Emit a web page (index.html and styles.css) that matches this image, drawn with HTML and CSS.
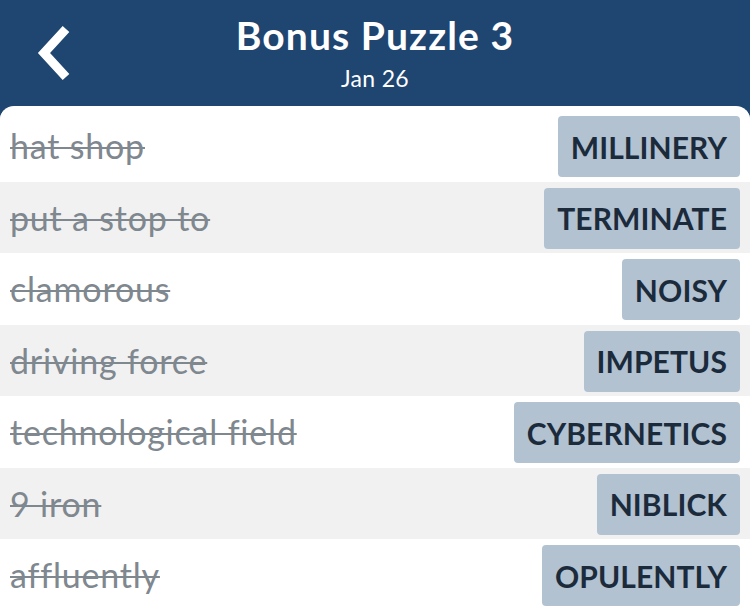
FILE: index.html
```html
<!DOCTYPE html>
<html>
<head>
<meta charset="utf-8">
<link rel="stylesheet" href="styles.css">
</head>
<body>
<div class="screen">
  <header class="topbar">
    <div class="back">
      <svg width="40" height="60" viewBox="0 0 40 60"><polyline points="30,7 8,31 30,55" fill="none" stroke="#fff" stroke-width="9" stroke-linejoin="miter"/></svg>
    </div>
    <div class="titles">
      <div class="title">Bonus Puzzle 3</div>
      <div class="date">Jan 26</div>
    </div>
  </header>
  <main class="card">
    <div class="row"><span class="clue">hat shop</span><span class="answer">MILLINERY</span></div>
    <div class="row alt"><span class="clue">put a stop to</span><span class="answer">TERMINATE</span></div>
    <div class="row"><span class="clue">clamorous</span><span class="answer">NOISY</span></div>
    <div class="row alt"><span class="clue">driving force</span><span class="answer">IMPETUS</span></div>
    <div class="row"><span class="clue">technological field</span><span class="answer">CYBERNETICS</span></div>
    <div class="row alt"><span class="clue">9 iron</span><span class="answer">NIBLICK</span></div>
    <div class="row"><span class="clue">affluently</span><span class="answer">OPULENTLY</span></div>
  </main>
</div>
</body>
</html>
```
FILE: styles.css
```css
html, body {
  margin: 0;
  padding: 0;
  background: #1f4571;
}
body {
  font-family: Lato, "Open Sans", sans-serif;
  width: 750px;
  height: 608px;
  overflow: hidden;
}
.screen {
  display: flex;
  flex-direction: column;
  height: 608px;
}
.topbar {
  height: 106px;
  background: #1f4571;
  position: relative;
  display: flex;
  justify-content: center;
  color: #fff;
}
.back {
  position: absolute;
  left: 36px;
  top: 22px;
}
.titles {
  display: flex;
  flex-direction: column;
  align-items: center;
  padding-top: 12px;
}
.title {
  font-weight: 700;
  font-size: 39px;
  line-height: 46px;
  letter-spacing: 1.1px;
}
.date {
  font-size: 23px;
  line-height: 28px;
  margin-top: 6px;
  letter-spacing: 0.3px;
}
.card {
  flex: 1;
  background: #fff;
  border-radius: 14px 14px 0 0;
  padding-top: 4px;
  overflow: hidden;
}
.row {
  height: 71.5px;
  box-sizing: border-box;
  padding: 6px 10px 4.5px 10px;
  display: flex;
  align-items: stretch;
  justify-content: space-between;
  background: #fff;
}
.row.alt {
  background: #f1f1f1;
}
.clue {
  align-self: center;
  font-size: 34px;
  color: #7f878f;
  text-decoration: line-through;
  text-decoration-thickness: 2px;
  letter-spacing: 0.8px;
  margin-top: -2px;
}
.answer {
  background: #b2c2d1;
  color: #1c2b3b;
  font-weight: 700;
  font-size: 30px;
  letter-spacing: 0.1px;
  padding: 0 13px;
  border-radius: 4px;
  display: flex;
  align-items: center;
}
```
